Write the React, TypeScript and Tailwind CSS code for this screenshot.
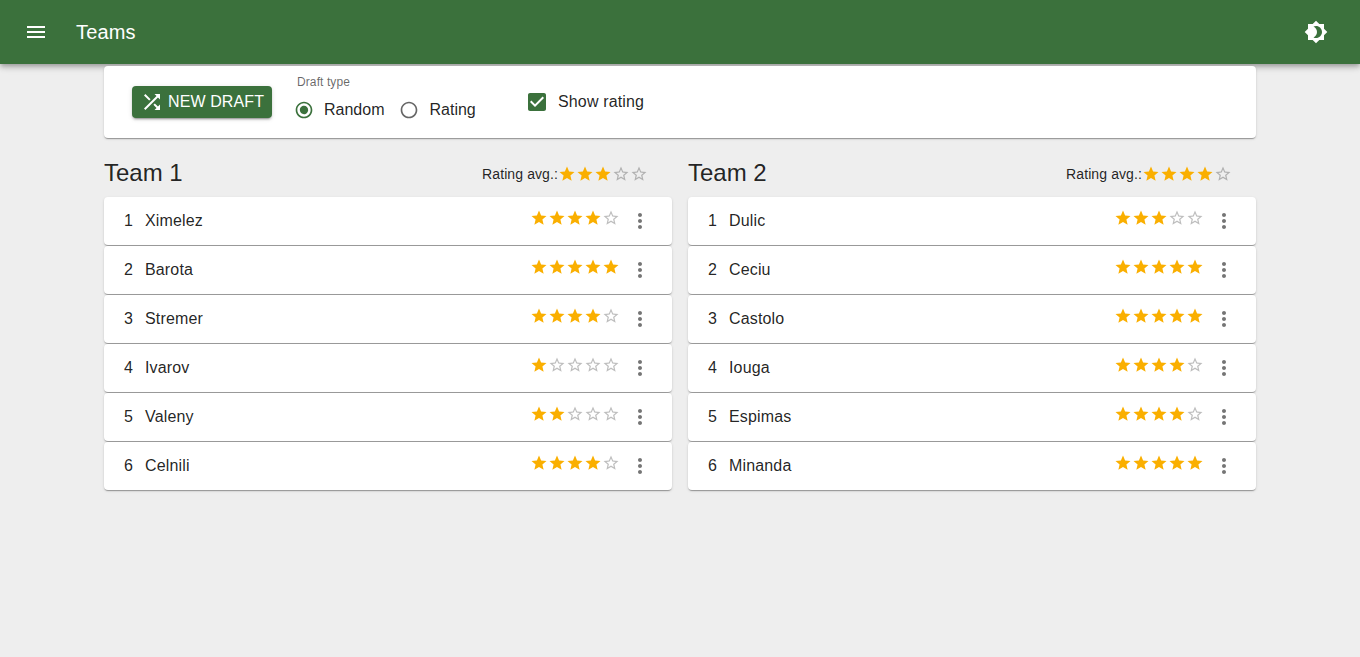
import { useState, type ReactNode } from 'react';

const STAR =
  'M12 17.27L18.18 21l-1.64-7.03L22 9.24l-7.19-.61L12 2 9.19 8.63 2 9.24l5.46 4.73L5.82 21z';
const STAR_BORDER =
  'M22 9.24l-7.19-.62L12 2 9.19 8.63 2 9.24l5.46 4.73L5.82 21 12 17.27 18.18 21l-1.63-7.03L22 9.24zM12 15.4l-3.76 2.27 1-4.28-3.32-2.88 4.38-.38L12 6.1l1.71 4.04 4.38.38-3.32 2.88 1 4.28L12 15.4z';
const MENU = 'M3 18h18v-2H3v2zm0-5h18v-2H3v2zm0-7v2h18V6H3z';
const BRIGHTNESS =
  'M20 8.69V4h-4.69L12 .69 8.69 4H4v4.69L.69 12 4 15.31V20h4.69L12 23.31 15.31 20H20v-4.69L23.31 12 20 8.69zM12 18c-.89 0-1.74-.2-2.5-.55C11.56 16.5 13 14.42 13 12s-1.44-4.5-3.5-5.45C10.26 6.2 11.11 6 12 6c3.31 0 6 2.69 6 6s-2.69 6-6 6z';
const SHUFFLE =
  'M10.59 9.17L5.41 4 4 5.41l5.17 5.17 1.42-1.41zM14.5 4l2.04 2.04L4 18.59 5.41 20 17.96 7.46 20 9.5V4h-5.5zm.33 9.41l-1.41 1.41 3.13 3.13L14.5 20H20v-5.5l-2.04 2.04-3.13-3.13z';
const MORE =
  'M12 8c1.1 0 2-.9 2-2s-.9-2-2-2-2 .9-2 2 .9 2 2 2zm0 2c-1.1 0-2 .9-2 2s.9 2 2 2 2-.9 2-2-.9-2-2-2zm0 6c-1.1 0-2 .9-2 2s.9 2 2 2 2-.9 2-2-.9-2-2-2z';
const RADIO_RING =
  'M12 2C6.48 2 2 6.48 2 12s4.48 10 10 10 10-4.48 10-10S17.52 2 12 2zm0 18c-4.42 0-8-3.58-8-8s3.58-8 8-8 8 3.58 8 8-3.58 8-8 8z';
const RADIO_DOT =
  'M8.465 8.465C9.37 7.56 10.62 7 12 7C14.76 7 17 9.24 17 12C17 13.38 16.44 14.63 15.535 15.535C14.63 16.44 13.38 17 12 17C9.24 17 7 14.76 7 12C7 10.62 7.56 9.37 8.465 8.465Z';
const CHECKED =
  'M19 3H5c-1.11 0-2 .9-2 2v14c0 1.1.89 2 2 2h14c1.11 0 2-.9 2-2V5c0-1.1-.89-2-2-2zm-9 14l-5-5 1.41-1.41L10 14.17l7.59-7.59L19 8l-9 9z';
const UNCHECKED =
  'M19 5v14H5V5h14m0-2H5c-1.1 0-2 .9-2 2v14c0 1.1.9 2 2 2h14c1.1 0 2-.9 2-2V5c0-1.1-.9-2-2-2z';

type Player = { name: string; rating: number };
type Team = { name: string; average: number; players: Player[] };

const teams: Team[] = [
  {
    name: 'Team 1',
    average: 3,
    players: [
      { name: 'Ximelez', rating: 4 },
      { name: 'Barota', rating: 5 },
      { name: 'Stremer', rating: 4 },
      { name: 'Ivarov', rating: 1 },
      { name: 'Valeny', rating: 2 },
      { name: 'Celnili', rating: 4 },
    ],
  },
  {
    name: 'Team 2',
    average: 4,
    players: [
      { name: 'Dulic', rating: 3 },
      { name: 'Ceciu', rating: 5 },
      { name: 'Castolo', rating: 5 },
      { name: 'Iouga', rating: 4 },
      { name: 'Espimas', rating: 4 },
      { name: 'Minanda', rating: 5 },
    ],
  },
];

function Icon({ d, className }: { d: string; className: string }) {
  return (
    <svg viewBox="0 0 24 24" fill="currentColor" aria-hidden="true" className={`shrink-0 ${className}`}>
      <path d={d} />
    </svg>
  );
}

function Paper({ className, children }: { className: string; children: ReactNode }) {
  return (
    <div
      className={`rounded bg-white shadow-[0px_2px_1px_-1px_rgba(0,0,0,0.2),0px_1px_1px_0px_rgba(0,0,0,0.14),0px_1px_3px_0px_rgba(0,0,0,0.12)] ${className}`}
    >
      {children}
    </div>
  );
}

function Rating({ value }: { value: number }) {
  return (
    <span className="flex" role="img" aria-label={`${value} Stars`}>
      {[1, 2, 3, 4, 5].map((n) => (
        <Icon
          key={n}
          d={n <= value ? STAR : STAR_BORDER}
          className={n <= value ? 'size-[18px] text-[#faaf00]' : 'size-[18px] text-black/26'}
        />
      ))}
    </span>
  );
}

function RadioOption({ label, checked, onSelect }: { label: string; checked: boolean; onSelect: () => void }) {
  return (
    <button type="button" role="radio" aria-checked={checked} onClick={onSelect} className="flex items-center gap-2.5">
      <svg
        viewBox="0 0 24 24"
        fill="currentColor"
        className={checked ? 'size-5 text-[#3b713c]' : 'size-5 text-black/60'}
      >
        <path d={RADIO_RING} />
        {checked && <path d={RADIO_DOT} />}
      </svg>
      <span>{label}</span>
    </button>
  );
}

function TeamColumn({ team, showRating }: { team: Team; showRating: boolean }) {
  return (
    <section className="flex-1">
      <div className="flex h-12 items-center justify-between pr-6">
        <h2 className="text-2xl leading-8">{team.name}</h2>
        {showRating && (
          <div className="flex items-center pt-0.5 text-sm tracking-[0.1px]">
            <span>Rating avg.:</span>
            <Rating value={team.average} />
          </div>
        )}
      </div>
      <ol className="flex flex-col gap-px">
        {team.players.map((player, i) => (
          <li key={player.name}>
            <Paper className="flex h-12 items-center px-5">
              <span className="w-[21px]">{i + 1}</span>
              <span className="flex-1 tracking-[0.15px]">{player.name}</span>
              {showRating && (
                <span className="pb-1.5">
                  <Rating value={player.rating} />
                </span>
              )}
              <button type="button" aria-label="Player actions" className="ml-2 text-black/54">
                <Icon d={MORE} className="size-6" />
              </button>
            </Paper>
          </li>
        ))}
      </ol>
    </section>
  );
}

export default function App() {
  const [draftType, setDraftType] = useState('Random');
  const [showRating, setShowRating] = useState(true);

  return (
    <div className="min-h-screen bg-[#eeeeee] font-['Liberation_Sans',Arial,sans-serif] text-base text-black/87">
      <header className="flex h-16 items-center bg-[#3b713c] pr-8 pl-6 text-white shadow-[0px_2px_4px_-1px_rgba(0,0,0,0.2),0px_4px_5px_0px_rgba(0,0,0,0.14),0px_1px_10px_0px_rgba(0,0,0,0.12)]">
        <button type="button" aria-label="Menu">
          <Icon d={MENU} className="size-6" />
        </button>
        <h1 className="ml-7 flex-1 text-xl tracking-[0.15px]">Teams</h1>
        <button type="button" aria-label="Toggle theme">
          <Icon d={BRIGHTNESS} className="size-6" />
        </button>
      </header>

      <main className="mx-auto w-[1152px] pt-0.5">
        <Paper className="flex h-[72px] items-center pl-7">
          <button
            type="button"
            className="flex h-8 w-[140px] items-center gap-1 rounded bg-[#3b713c] pl-2 tracking-[0.1px] whitespace-nowrap text-white shadow-[0px_3px_1px_-2px_rgba(0,0,0,0.2),0px_2px_2px_0px_rgba(0,0,0,0.14),0px_1px_5px_0px_rgba(0,0,0,0.12)]"
          >
            <Icon d={SHUFFLE} className="size-6" />
            NEW DRAFT
          </button>
          <div role="radiogroup" className="ml-[22px] h-[60px] w-[231px]">
            <div className="pl-[3px] text-xs leading-5 tracking-[0.1px] text-black/60">Draft type</div>
            <div className="flex h-9 items-center gap-[15px]">
              {['Random', 'Rating'].map((type) => (
                <RadioOption
                  key={type}
                  label={type}
                  checked={draftType === type}
                  onSelect={() => setDraftType(type)}
                />
              ))}
            </div>
          </div>
          <button
            type="button"
            role="checkbox"
            aria-checked={showRating}
            onClick={() => setShowRating(!showRating)}
            className="flex items-center gap-[9px]"
          >
            <Icon d={showRating ? CHECKED : UNCHECKED} className="size-6 text-[#3b713c]" />
            <span className="tracking-[0.15px]">Show rating</span>
          </button>
        </Paper>

        <div className="mt-[11px] flex gap-4">
          {teams.map((team) => (
            <TeamColumn key={team.name} team={team} showRating={showRating} />
          ))}
        </div>
      </main>
    </div>
  );
}
